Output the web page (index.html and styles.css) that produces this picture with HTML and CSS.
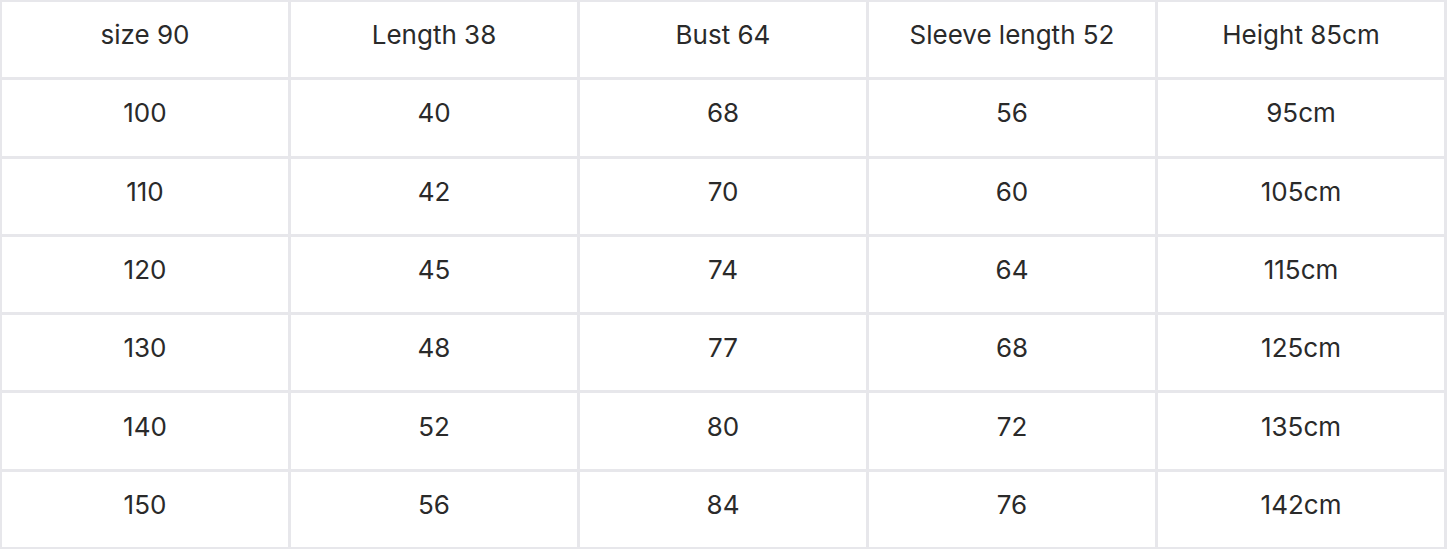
FILE: index.html
```html
<!DOCTYPE html>
<html lang="en">
<head>
<meta charset="utf-8">
<title>Size chart</title>
<link rel="stylesheet" href="styles.css">
</head>
<body>
<div class="chart">
  <div class="cell">size 90</div><div class="cell">Length 38</div><div class="cell">Bust 64</div><div class="cell">Sleeve length 52</div><div class="cell">Height 85cm</div>
  <div class="cell">100</div><div class="cell">40</div><div class="cell">68</div><div class="cell">56</div><div class="cell">95cm</div>
  <div class="cell">110</div><div class="cell">42</div><div class="cell">70</div><div class="cell">60</div><div class="cell">105cm</div>
  <div class="cell">120</div><div class="cell">45</div><div class="cell">74</div><div class="cell">64</div><div class="cell">115cm</div>
  <div class="cell">130</div><div class="cell">48</div><div class="cell">77</div><div class="cell">68</div><div class="cell">125cm</div>
  <div class="cell">140</div><div class="cell">52</div><div class="cell">80</div><div class="cell">72</div><div class="cell">135cm</div>
  <div class="cell">150</div><div class="cell">56</div><div class="cell">84</div><div class="cell">76</div><div class="cell">142cm</div>
</div>
</body>
</html>
```
FILE: styles.css
```css
html, body {
  margin: 0;
  padding: 0;
  background: #ffffff;
}
.chart {
  width: 1447px;
  height: 549px;
  box-sizing: border-box;
  padding: 2px 3px 2px 2px;
  background: #e7e7eb;
  display: grid;
  grid-template-columns: repeat(5, 1fr);
  grid-template-rows: repeat(7, 1fr);
  gap: 3px;
}
.cell {
  background: #ffffff;
  display: flex;
  align-items: center;
  justify-content: center;
  padding-bottom: 10px;
  font-family: Inter, sans-serif;
  font-size: 26px;
  font-weight: 400;
  color: #2a2a2a;
  letter-spacing: 0;
}
```
